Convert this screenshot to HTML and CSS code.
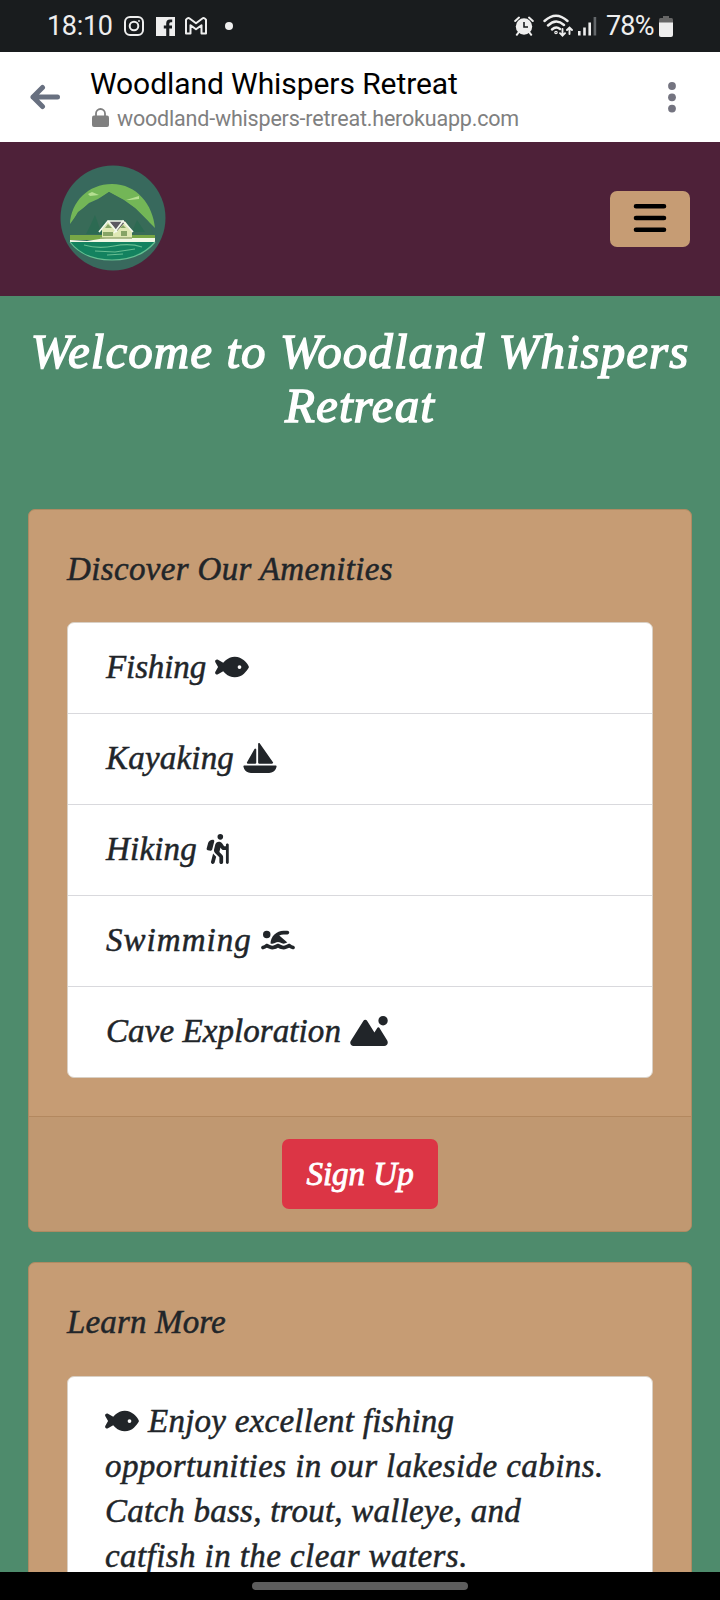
FILE: index.html
```html
<!DOCTYPE html>
<html lang="en">
<head>
<meta charset="utf-8">
<title>Woodland Whispers Retreat</title>
<link rel="stylesheet" href="styles.css">
</head>
<body>
<svg class="defs" aria-hidden="true">
  <symbol id="fish" viewBox="0 0 576 512"><path d="M180.5 141.5C219.7 108.5 272.6 80 336 80s116.3 28.5 155.5 61.5c39.1 33 66.9 72.4 81 99.8c4.7 9.2 4.7 20.1 0 29.3c-14.1 27.4-41.9 66.8-81 99.8C452.3 403.5 399.4 432 336 432s-116.3-28.5-155.5-61.5c-16.2-13.7-30.5-28.5-42.7-43.1L48.1 379.6c-12.5 7.3-28.4 5.3-38.7-4.9S-3 348.7 4.2 336.1L50 256 4.2 175.9c-7.2-12.6-5-28.4 5.3-38.6s26.1-12.2 38.7-4.9l89.7 52.3c12.2-14.6 26.5-29.4 42.7-43.1zM448 256a32 32 0 1 0 -64 0 32 32 0 1 0 64 0z"/></symbol>
</svg>
<div class="screen">
  <div class="status">
    <span class="time">18:10</span>
    <svg class="insta" width="20" height="20" viewBox="0 0 20 20" fill="none" stroke="#eee" stroke-width="2"><rect x="1" y="1" width="18" height="18" rx="5"/><circle cx="10" cy="10" r="4.3"/><circle cx="15" cy="5" r=".6" stroke-width="1"/></svg>
    <svg class="fb" width="19" height="19" viewBox="0 0 19 19"><path fill="#eee" d="M0 0h19v19h-5.700v-7.500h2.700v-3h-2.700V6.700q0-1.500 1.500-1.500h1.400V2.500h-2.300q-3.700 0-3.700 3.900v2.100H7.800v3h2.400V19H0z"/></svg>
    <svg class="gmail" width="22" height="18" viewBox="0 0 22 18" fill="none" stroke="#eee" stroke-width="2" stroke-linejoin="round"><path d="M1 2.800Q2.700 0 5 1.700l6 4.600 6-4.600q2.300-1.700 4 1.100V16.500h-4.500V8.200L11 12.300 5.500 8.200v8.300H1z"/></svg>
    <span class="dot"></span>
    <span class="grow"></span>
    <svg class="alarm" width="20" height="20" viewBox="0 0 20 20"><g fill="none" stroke="#eee" stroke-width="2" stroke-linecap="round"><path d="M1.200 5 5 1.600M18.800 5 15 1.600M4.500 16.500 2.800 18.800M15.500 16.500l1.700 2.300"/></g><circle cx="10" cy="10.500" r="8.200" fill="#eee"/><path d="M10 6v5h4" fill="none" stroke="#191c1e" stroke-width="1.600"/></svg>
    <svg class="wifi" width="30" height="24" viewBox="0 0 30 24" fill="none" stroke="#eee" stroke-width="2.400" stroke-linecap="round"><path d="M1.500 7Q13-3.500 24.500 7M5 11.500q8-7.500 16-.5M9 15.500q4-3.600 8-.5"/><circle cx="13" cy="18.500" r=".6"/><path stroke-width="1.900" d="M19.500 15v6.500m-2.500-2.300 2.500 2.500 2.500-2.500M26.500 20v-6.300M24 16l2.500-2.500L29 16"/></svg>
    <svg class="signal" width="19" height="20" viewBox="0 0 19 20"><path fill="#eee" d="M0 15h2.600v4.500H0zM5.200 11.500h2.600v8H5.200zM10.400 6.500H13v13h-2.600z"/><path fill="#63676a" d="M15.600 1h2.600v18.500h-2.600z"/></svg>
    <span class="percent">78%</span>
    <svg class="battery" width="14" height="21" viewBox="0 0 14 21"><path fill="#666" d="M4 0h6v2h2.500Q14 2 14 4v4H0V4q0-2 1.500-2H4z"/><path fill="#eee" d="M0 6.500h14V19q0 2-2 2H2q-2 0-2-2z"/></svg>
  </div>
  <div class="browser">
    <svg class="back" width="32" height="26" viewBox="0 0 32 26" fill="none" stroke="#687080" stroke-width="5" stroke-linecap="round" stroke-linejoin="round"><path d="M28.500 13H4M13.500 3.500 4 13l9.500 9.500"/></svg>
    <div class="site">
      <div class="site-name">Woodland Whispers Retreat</div>
      <div class="site-url"><svg width="17" height="19" viewBox="0 0 17 19"><path d="M4 8V5.500a4.500 4.500 0 0 1 9 0V8" fill="none" stroke="#808080" stroke-width="1.800"/><rect y="7.500" width="17" height="11.500" rx="2" fill="#808080"/></svg><span>woodland-whispers-retreat.herokuapp.com</span></div>
    </div>
    <svg class="more" width="8" height="31" viewBox="0 0 8 31" fill="#747480"><circle cx="4" cy="4" r="3.900"/><circle cx="4" cy="15.300" r="3.900"/><circle cx="4" cy="26.600" r="3.900"/></svg>
  </div>
  <nav class="navbar">
    <svg class="logo" width="106" height="106" viewBox="0 0 106 106">
      <circle cx="53" cy="53" r="52.500" fill="#38695d"/>
      <path d="M10 59C11 37 28 19 52 19c25 0 41 21 43 44L75 43 64 35 49 27 38 34 29 38 18 48z" fill="#73b657"/>
      <path d="M28 29l4-2 7 3-9 1zM66 35l13-4v3l-9 1z" fill="#b5df91"/>
      <path d="M10 61 18 47l11-8 9-4 11-8 14 8 13 9 12 12 7 16H10z" fill="#386b58"/>
      <path d="M26 69l5-10 4-9 5 14 4-8 5 13zM72 67l5-12 8 12z" fill="#2c6a52"/>
      <path d="M10 70h85v5H10z" fill="#78a746"/>
      <path d="M10 75l17 1 19-3h49v4H10z" fill="#f1f7e4"/>
      <path d="M10 77h85C88 88 73 95 52 95S16 88 10 77z" fill="#13825f"/>
      <path d="M10 77q14 18 42 18t43-18M24 80q14 4 30 1t28 1M35 86l20 1 20-3M47 90l16-1" fill="none" stroke="#66bd91" stroke-width="1.200"/>
      <path d="M42 73v-9l7-8h16l7 10v7z" fill="#dfe8b4"/>
      <path d="M49 56h17l-9 10z" fill="#5c5961"/>
      <path d="M39 67 48 56 57 67M54 68 63 56 73 67M48 56h16" fill="none" stroke="#f4f9ec" stroke-width="1.700"/>
      <path d="M45 63l3-4 4 4zM60 63l3-3 3 3zM43 67h10v4H43zM61 66h6v5h-6z" fill="#86a466"/>
      <path d="M40 73h32" stroke="#9aab73" stroke-width="1.500"/>
    </svg>
    <button class="toggle" aria-label="Menu"><svg width="34" height="30" viewBox="0 0 34 30"><path d="M3 3.300h28M3 15h28M3 26.700h28" stroke="#000" stroke-width="4.600" stroke-linecap="round"/></svg></button>
  </nav>
  <main>
    <h1>Welcome to Woodland Whispers Retreat</h1>
    <section class="card">
      <div class="card-body">
        <h2>Discover Our Amenities</h2>
        <ul class="list">
          <li><span class="fishing">Fishing</span><svg class="icon wide"><use href="#fish"/></svg></li>
          <li><span class="kayaking">Kayaking</span><svg class="icon wide" viewBox="0 0 576 512"><path d="M256 16c0-7 4.500-13.200 11.200-15.300s13.900 .4 17.900 6.100l224 320c3.400 4.900 3.800 11.300 1.100 16.600s-8.200 8.600-14.200 8.600H272c-8.800 0-16-7.200-16-16V16zM212.100 96.500c7 1.900 11.900 8.200 11.900 15.500V336c0 8.800-7.200 16-16 16H80c-5.700 0-11-3-13.800-8s-2.900-11-.1-16l128-224c3.600-6.300 11-9.400 18-7.500zM5.700 404.300C2.800 394.100 10.500 384 21.100 384H554.900c10.600 0 18.300 10.100 15.400 20.300l-4 14.300C550.700 473.900 500.400 512 443 512H133C75.600 512 25.300 473.900 9.700 418.700l-4-14.300z"/></svg></li>
          <li><span class="hiking">Hiking</span><svg class="icon narrow" viewBox="0 0 384 512"><path d="M192 48a48 48 0 1 1 96 0 48 48 0 1 1 -96 0zm51.300 182.700L224.200 307l49.700 49.700c9 9 14.100 21.200 14.100 33.900V480c0 17.700-14.300 32-32 32s-32-14.300-32-32V397.300l-73.900-73.900c-15.800-15.800-22.200-38.600-16.900-60.300l20.400-84c8.300-34.100 42.700-54.900 76.700-46.400c19 4.800 35.600 16.400 46.400 32.700L305.100 208H336V184c0-13.300 10.700-24 24-24s24 10.700 24 24V488c0 13.300-10.700 24-24 24s-24-10.700-24-24V272H296.600c-16 0-31-8-39.900-21.400l-13.300-20zM81.100 471.900L117.300 334c3 4.200 6.400 8.200 10.100 11.900l41.900 41.900L142.900 488.100c-4.500 17.100-22 27.300-39.100 22.800s-27.300-22-22.800-39.100zm55.500-346L101.400 266.500c-3 12.100-14.900 19.900-27.200 17.900l-47.900-8c-14-2.300-22.900-16.300-19.200-30L31.900 155c9.500-34.800 41.100-59 77.200-59h4.200c15.600 0 27.100 14.700 23.300 29.800z"/></svg></li>
          <li><span class="swimming">Swimming</span><svg class="icon wide" viewBox="0 0 576 512"><path d="M309.500 178.400L447.900 297.100c-1.600 .9-3.200 2-4.800 3c-18 12.400-40.100 20.300-59.200 20.300c-19.600 0-40.800-7.700-59.200-20.300c-22.100-15.500-51.600-15.500-73.700 0c-17.100 11.800-38 20.300-59.200 20.300c-10.100 0-21.100-2.200-31.900-6.200C163.100 193.200 262.200 96 384 96h64c17.700 0 32 14.300 32 32s-14.300 32-32 32H384c-26.900 0-52.300 6.600-74.500 18.400zM160 160A64 64 0 1 1 32 160a64 64 0 1 1 128 0zM306.500 325.900C329 341.400 356.500 352 384 352c26.900 0 55.400-10.800 77.400-26.100c11.900-8.500 28.100-7.800 39.200 1.700c14.400 11.900 32.500 21 50.600 25.200c17.200 4 27.900 21.200 23.900 38.400s-21.200 27.900-38.400 23.900c-24.500-5.700-44.900-16.500-58.200-25C449.500 405.700 417 416 384 416c-31.900 0-60.600-9.900-80.400-18.900c-5.800-2.700-11.100-5.300-15.600-7.700c-4.500 2.400-9.700 5.100-15.600 7.700c-19.800 9-48.500 18.900-80.400 18.900c-33 0-65.500-10.300-94.500-25.800c-13.400 8.400-33.700 19.300-58.200 25c-17.200 4-34.400-6.700-38.400-23.900s6.700-34.400 23.900-38.400c18.100-4.200 36.200-13.300 50.600-25.200c11.100-9.400 27.300-10.100 39.200-1.700C136.700 341.200 165.100 352 192 352c27.500 0 55-10.600 77.500-26.100c11.100-7.900 25.900-7.900 37 0z"/></svg></li>
          <li><span class="cave">Cave Exploration</span><svg class="icon widest" viewBox="0 0 640 512"><path d="M560 160A80 80 0 1 0 560 0a80 80 0 1 0 0 160zM55.900 512H578.900c33.800 0 61.100-27.400 61.100-61.100c0-11.200-3.100-22.200-8.900-31.800l-132-216.300C495 196.100 487.800 192 480 192s-15 4.100-19.100 10.700l-48.200 79L286.800 81c-6.600-10.600-18.300-17-30.800-17s-24.100 6.400-30.800 17L8.600 426.400C3 435.300 0 445.600 0 456.100C0 487 25 512 55.900 512z"/></svg></li>
        </ul>
      </div>
      <div class="card-footer"><button class="signup">Sign Up</button></div>
    </section>
    <section class="card">
      <div class="card-body">
        <h2 class="learn">Learn More</h2>
        <div class="list story"><svg class="icon wide lead"><use href="#fish"/></svg><span class="first">Enjoy excellent fishing</span><br>opportunities in our lakeside cabins.<br><span class="third">Catch bass, trout, walleye, and</span><br>catfish in the clear waters.</div>
      </div>
    </section>
  </main>
  <div class="gesture"><span></span></div>
</div>
</body>
</html>
```
FILE: styles.css
```css
* { box-sizing: border-box; }
body { margin: 0; }
.defs { display: none; }
.screen {
  width: 720px;
  height: 1600px;
  display: flex;
  flex-direction: column;
  overflow: hidden;
  font-family: "Liberation Serif", serif;
}

.status {
  height: 52px;
  flex: none;
  display: flex;
  align-items: center;
  padding: 0 47px 0 47px;
  background: #191c1e;
  color: #eee;
  font: 27px/52px Roboto, sans-serif;
}
.status svg { flex: none; }
.time { width: 77px; letter-spacing: -0.3px; }
.fb { margin-left: 12px; }
.gmail { margin-left: 10px; }
.dot { width: 8px; height: 8px; margin-left: 18px; border-radius: 50%; background: #eee; }
.grow { flex: 1; }
.wifi { margin-left: 9px; }
.signal { margin-left: 5px; }
.percent { width: 50px; margin-left: 9px; letter-spacing: -0.8px; }
.battery { margin-left: 3px; }

.browser {
  height: 90px;
  flex: none;
  display: flex;
  padding: 0 44px 0 29px;
  background: #fff;
}
.back { margin-top: 32px; }
.site { flex: 1; padding-left: 29px; font-family: Roboto, sans-serif; }
.site-name { margin-top: 13px; font-size: 30px; line-height: 38px; letter-spacing: -0.08px; color: #000; white-space: nowrap; }
.site-url { display: flex; gap: 8px; padding-left: 2px; font-size: 21.500px; line-height: 32px; letter-spacing: -0.19px; color: #808080; white-space: nowrap; }
.site-url svg { margin-top: 5px; }
.more { margin-top: 30px; }

.navbar {
  height: 154px;
  flex: none;
  display: flex;
  align-items: center;
  justify-content: space-between;
  padding: 0 30px 0 60px;
  background: #4e2139;
}
.logo { margin-bottom: 2px; }
.toggle {
  width: 80px;
  height: 56px;
  display: flex;
  align-items: center;
  justify-content: center;
  padding: 0 0 2px;
  border: 0;
  border-radius: 7px;
  background: #c69c74;
}

main {
  flex: 1;
  min-height: 0;
  overflow: hidden;
  padding: 29px 28px 0;
  background: #4e8b6c;
}
h1 {
  margin: 0 -10px 76px;
  color: #fff;
  text-align: center;
  font-size: 49px;
  font-style: italic;
  font-weight: 400;
  line-height: 54px;
  letter-spacing: 1.050px;
  -webkit-text-stroke: 1.400px #fff;
}
.card {
  margin-bottom: 30px;
  border: 1px solid #af8a62;
  border-radius: 7px;
  background: #c69c74;
  color: #212529;
  font-size: 33px;
  font-style: italic;
  -webkit-text-stroke: 0.500px currentColor;
}
.card-body { padding: 37px 38px 38px; }
h2 {
  margin: 0 0 30px;
  font-size: inherit;
  font-weight: 400;
  line-height: 45px;
  letter-spacing: 0.350px;
}
h2.learn { margin-bottom: 31px; letter-spacing: 0.150px; }
.list {
  margin: 0;
  padding: 0;
  list-style: none;
  border: 1px solid #d9d0c5;
  border-radius: 7px;
  background: #fff;
}
.list li {
  height: 91px;
  padding: 22px 38px 0;
  border-top: 1px solid #d9d9dd;
  line-height: 45px;
  white-space: nowrap;
}
.list li:first-child { height: 90px; border-top: 0; }
.icon { height: 30px; margin-left: 9px; vertical-align: -4px; fill: #212529; stroke: none; }
.wide { width: 34px; }
.narrow { width: 23px; }
.widest { width: 38px; }
.fishing { letter-spacing: -0.100px; }
.kayaking, .hiking { letter-spacing: 0.200px; }
.swimming { letter-spacing: 1.050px; }
.cave { letter-spacing: 0.080px; }
.lead { margin: 0 9px 0 0; }
.story { height: 300px; padding: 22px 37px; line-height: 45px; letter-spacing: 0.420px; white-space: nowrap; }
.first { letter-spacing: 0.250px; }
.third { letter-spacing: 0.240px; }
.card-footer {
  height: 115px;
  display: flex;
  justify-content: center;
  padding-top: 22px;
  border-top: 1px solid #b3885f;
  background: #c09871;
  border-radius: 0 0 6px 6px;
}
.signup {
  width: 156px;
  height: 70px;
  padding: 0;
  border: 0;
  border-radius: 7px;
  background: #dc3545;
  color: #fff;
  font: italic 33px "Liberation Serif", serif;
  -webkit-text-stroke: 0.900px #fff;
}
.gesture {
  height: 28px;
  flex: none;
  display: flex;
  justify-content: center;
  padding-top: 10px;
  background: #000;
}
.gesture span { width: 216px; height: 8px; border-radius: 4px; background: #5d5d5d; }
```
